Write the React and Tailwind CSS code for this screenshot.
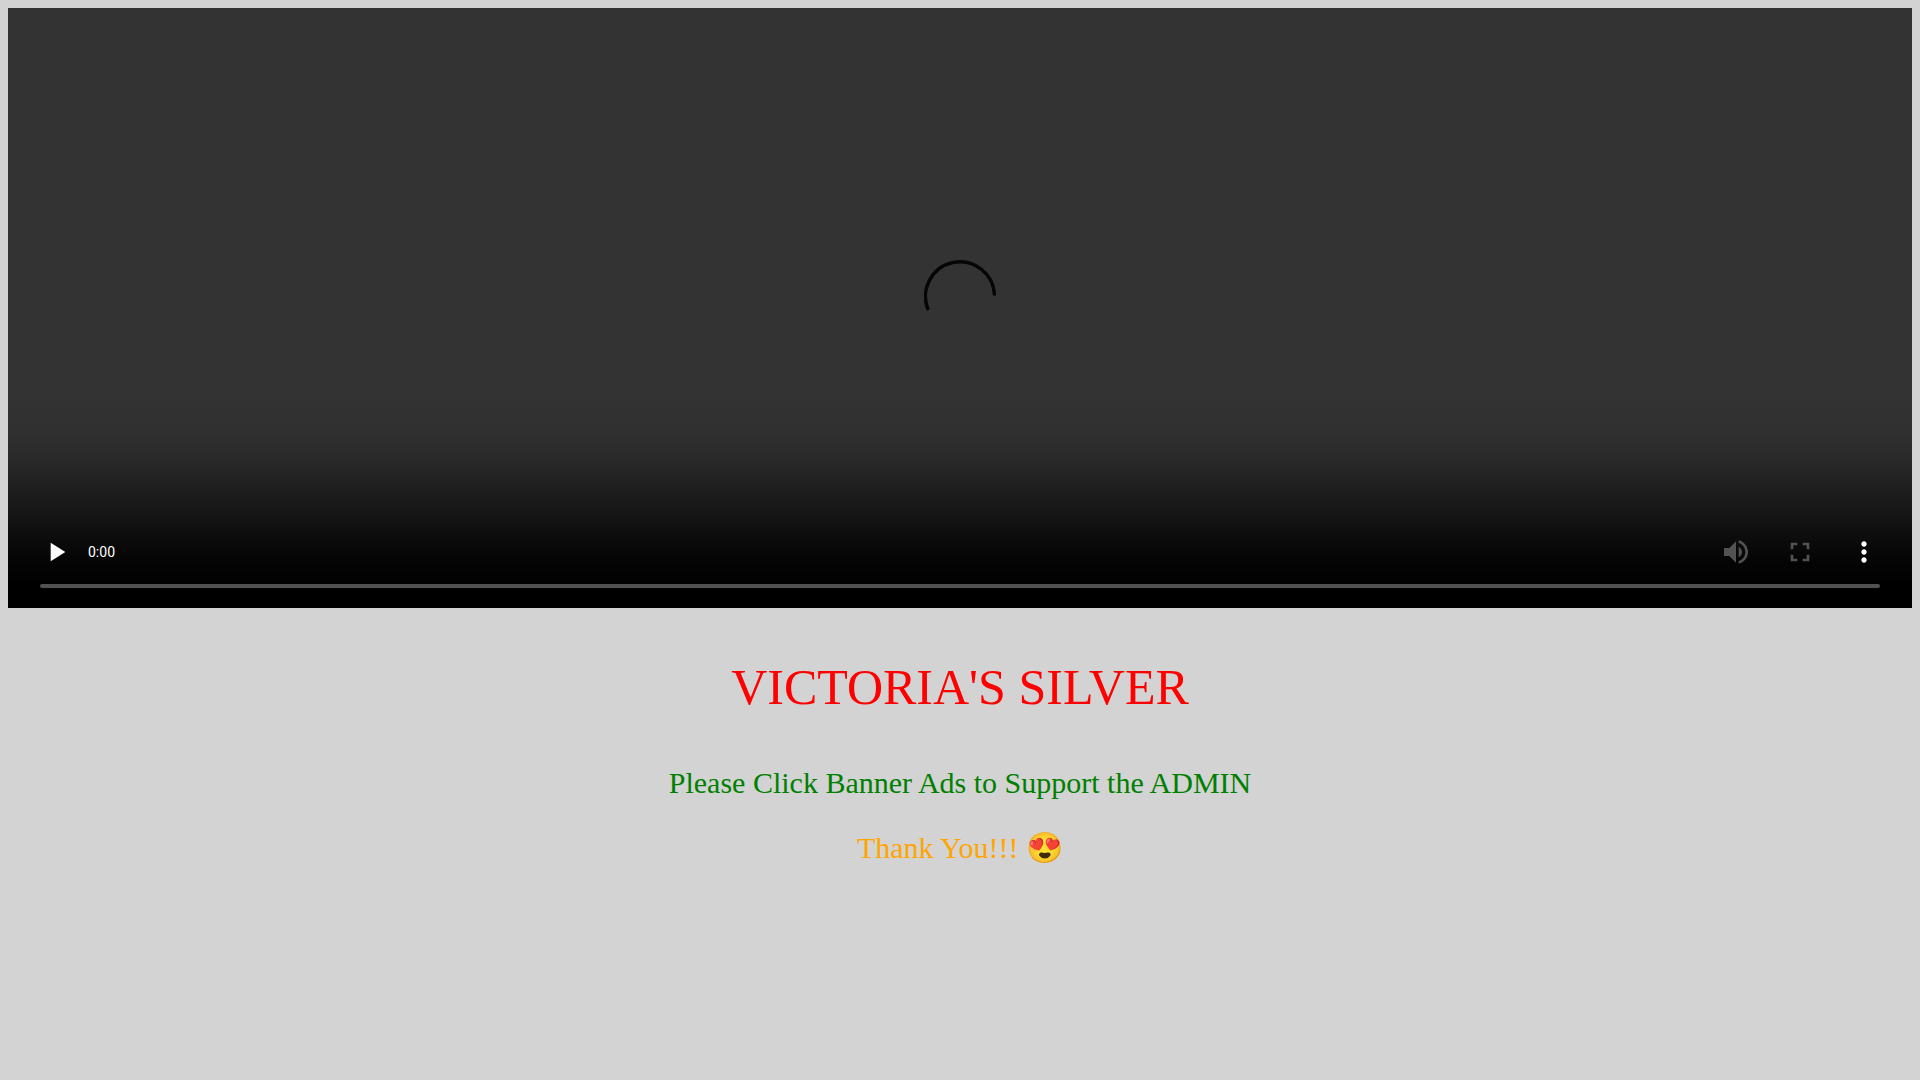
function PlayerButton({ label, path, disabled }) {
  return (
    <button
      type="button"
      aria-label={label}
      disabled={disabled}
      className="size-8 text-white disabled:text-[#525252]"
    >
      <svg viewBox="0 0 24 24" className="size-8" fill="currentColor">
        <path d={path} />
      </svg>
    </button>
  );
}

function Spinner() {
  return (
    <svg viewBox="0 0 72 72" className="size-18" fill="none" stroke="#050505" strokeWidth="3.4">
      <path d="M4.3 50A34.5 34.5 0 1 1 70.5 35.5" />
    </svg>
  );
}

function VideoPlayer() {
  return (
    <section aria-label="Video player" className="relative h-[600px] bg-[#333333]">
      <div className="absolute inset-x-0 top-[252px] flex justify-center">
        <Spinner />
      </div>

      <div className="absolute inset-x-0 bottom-0 flex h-[216px] flex-col justify-end bg-[linear-gradient(to_bottom,#333333_0px,#303030_40px,#2a2a2a_66px,#1f1f1f_94px,#171717_118px,#0c0c0c_146px,#050505_168px,#000000_192px)] px-8 pb-5">
        <div className="mb-4 flex items-center">
          <PlayerButton label="Play" path="M8 5v14l11-7z" />
          <span className="ml-4 font-['Roboto',sans-serif] text-sm text-white">0:00</span>
          <div className="ml-auto flex gap-8">
            <PlayerButton
              label="Mute"
              disabled
              path="M3 9v6h4l5 5V4L7 9H3zm13.5 3c0-1.77-1.02-3.29-2.5-4.03v8.05c1.48-.73 2.5-2.25 2.5-4.02zM14 3.23v2.06c2.89.86 5 3.54 5 6.71s-2.11 5.85-5 6.71v2.06c4.01-.91 7-4.49 7-8.77s-2.99-7.86-7-8.77z"
            />
            <PlayerButton
              label="Enter full screen"
              disabled
              path="M7 14H5v5h5v-2H7v-3zm-2-4h2V7h3V5H5v5zm12 7h-3v2h5v-5h-2v3zM14 5v2h3v3h2V5h-5z"
            />
            <PlayerButton
              label="More media controls"
              path="M12 8c1.1 0 2-.9 2-2s-.9-2-2-2-2 .9-2 2 .9 2 2 2zm0 2c-1.1 0-2 .9-2 2s.9 2 2 2 2-.9 2-2-.9-2-2-2zm0 6c-1.1 0-2 .9-2 2s.9 2 2 2 2-.9 2-2-.9-2-2-2z"
            />
          </div>
        </div>
        <input
          type="range"
          aria-label="Video time scrubber"
          min="0"
          max="100"
          defaultValue="0"
          disabled
          className="block h-1 w-full appearance-none rounded-sm bg-[#505050] [&::-webkit-slider-thumb]:size-0 [&::-webkit-slider-thumb]:appearance-none"
        />
      </div>
    </section>
  );
}

export default function App() {
  return (
    <div className="min-h-screen bg-[#d3d3d3] p-2 font-['Liberation_Serif',serif]">
      <VideoPlayer />
      <main className="text-center">
        <h1 className="mt-[50px] text-[50px] leading-[59px] text-[#ff0000]">VICTORIA'S SILVER</h1>
        <p className="mt-12 text-[30px] leading-[35px] text-[#008000]">
          Please Click Banner Ads to Support the ADMIN
        </p>
        <p className="mt-[30px] text-[30px] leading-[35px] text-[#ffa500]">Thank You!!! 😍</p>
      </main>
    </div>
  );
}
